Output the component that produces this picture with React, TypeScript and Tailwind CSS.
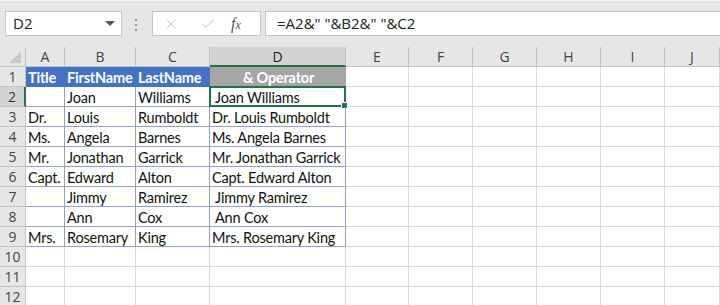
import {Check, X} from "lucide-react";

const colWidths = "grid-cols-[26px_39px_71px_74px_136px_63px_64px_64px_64px_64px_1fr]";
const letters = ["A", "B", "C", "D", "E", "F", "G", "H", "I", "J"];

const rows: string[][] = [
    ["", "Joan", "Williams", " Joan Williams"],
    ["Dr.", "Louis", "Rumboldt", "Dr. Louis Rumboldt"],
    ["Ms.", "Angela", "Barnes", "Ms. Angela Barnes"],
    ["Mr.", "Jonathan", "Garrick", "Mr. Jonathan Garrick"],
    ["Capt.", "Edward", "Alton", "Capt. Edward Alton"],
    ["", "Jimmy", "Ramirez", " Jimmy Ramirez"],
    ["", "Ann", "Cox", " Ann Cox"],
    ["Mrs.", "Rosemary", "King", "Mrs. Rosemary King"],
];

const uiFont = "font-['Open_Sans',sans-serif]";
const cellFont = "font-['Lato',sans-serif] text-[14.5px] tracking-[-0.2px] text-[#111] whitespace-pre leading-[19px] pl-[2px] pt-[1px] overflow-visible";

function EmptyCells() {
    return (
        <>
            {Array.from({length: 6}).map((_, i) => (
                <div key={i} className="h-[20px] border-r border-b border-[#d9d9d9]" />
            ))}
        </>
    );
}

function RowHeader({n, selected}: {n: number; selected?: boolean}) {
    return (
        <div
            className={
                selected
                    ? `h-[20px] flex items-center justify-center bg-[#d3d3d3] border-b border-[#c4c4c4] border-r-2 border-r-[#217346] text-[14px] text-[#333] ${uiFont}`
                    : `h-[20px] flex items-center justify-center bg-[#e6e6e6] border-b border-r border-[#c4c4c4] text-[14px] text-[#444] ${uiFont}`
            }>
            {n}
        </div>
    );
}

export default function App() {
    return (
        <div className="w-[720px] h-[305px] overflow-hidden bg-white">
            <div className="h-[47px] bg-[#e6e6e6] border-t border-[#f2f2f2] flex items-start pt-[10px] pl-[5px]">
                <div className="w-[117px] h-[25px] bg-white border border-[#c6c6c6] flex items-center justify-between pl-[7px] pr-[6px]">
                    <span className={`text-[15px] text-[#222] ${uiFont}`}>D2</span>
                    <span className="w-0 h-0 border-l-[5px] border-r-[5px] border-t-[5px] border-l-transparent border-r-transparent border-t-[#555]" />
                </div>
                <div className="ml-[13px] mt-[8px] flex flex-col gap-[3px]">
                    <span className="w-[2px] h-[2px] bg-[#9a9a9a]" />
                    <span className="w-[2px] h-[2px] bg-[#9a9a9a]" />
                    <span className="w-[2px] h-[2px] bg-[#9a9a9a]" />
                </div>
                <div className="ml-[15px] w-[109px] h-[25px] bg-white border border-[#c6c6c6] flex items-center">
                    <X className="ml-[10px] w-[16px] h-[16px] text-[#c2c2c2]" strokeWidth={1.5} />
                    <Check className="ml-[21px] w-[16px] h-[16px] text-[#c2c2c2]" strokeWidth={1.5} />
                    <span className="ml-[15px] text-[#555] italic font-['Liberation_Serif',serif] text-[16px] leading-none">
                        f<span className="text-[12px]">x</span>
                    </span>
                </div>
                <div className="ml-[4px] flex-1 h-[25px] bg-white border-y border-l border-[#c6c6c6] flex items-center pl-[11px]">
                    <span className={`text-[15px] text-[#222] whitespace-pre ${uiFont}`}>=A2&amp;" "&amp;B2&amp;" "&amp;C2</span>
                </div>
            </div>

            <div className={`grid ${colWidths}`}>
                {/* column headers */}
                <div className="relative h-[20px] bg-[#e6e6e6] border-r border-b border-[#c4c4c4]">
                    <span className="absolute right-[4px] bottom-[3px] w-0 h-0 border-b-[12px] border-l-[12px] border-b-[#c8c8c8] border-l-transparent" />
                </div>
                {letters.map((l) => (
                    <div
                        key={l}
                        className={
                            l === "D"
                                ? `h-[20px] flex items-center justify-center bg-[#d3d3d3] border-r border-[#c4c4c4] border-b-2 border-b-[#217346] text-[14px] text-[#222] ${uiFont}`
                                : `h-[20px] flex items-center justify-center bg-[#e6e6e6] border-r border-b border-[#c4c4c4] text-[14px] text-[#444] ${uiFont}`
                        }>
                        {l}
                    </div>
                ))}

                {/* row 1: table header */}
                <RowHeader n={1} />
                <div className={`h-[20px] bg-[#4472c4] border-r border-b border-[#4472c4] font-bold ${cellFont} !text-white`}>Title</div>
                <div className={`h-[20px] bg-[#4472c4] border-r border-b border-[#4472c4] font-bold ${cellFont} !text-white`}>FirstName</div>
                <div className={`h-[20px] bg-[#4472c4] border-r border-b border-[#4472c4] font-bold ${cellFont} !text-white`}>LastName</div>
                <div className={`h-[20px] bg-[#a5a5a5] border-r border-b border-[#a5a5a5] font-bold text-center ${cellFont} !text-white`}>&amp; Operator</div>
                <EmptyCells />

                {rows.map((r, i) => (
                    <div key={i} className="contents">
                        <RowHeader n={i + 2} selected={i === 0} />
                        <div className={`h-[20px] border-r border-b border-[#8fa3c7] ${cellFont}`}>{r[0]}</div>
                        <div className={`h-[20px] border-r border-b border-[#8fa3c7] ${cellFont}`}>{r[1]}</div>
                        <div className={`h-[20px] border-r border-b border-[#8fa3c7] ${cellFont}`}>{r[2]}</div>
                        <div className={`relative h-[20px] border-r border-b border-[#8fa3c7] ${cellFont}`}>
                            {r[3]}
                            {i === 0 ? (
                                <>
                                    <div className="absolute -left-[1px] -top-[1px] w-[137px] h-[21px] border-2 border-[#217346]" />
                                    <div className="absolute -right-[3px] -bottom-[3px] w-[5px] h-[5px] bg-[#217346] border border-white box-content" />
                                </>
                            ) : null}
                        </div>
                        <EmptyCells />
                    </div>
                ))}

                {[10, 11, 12].map((n) => (
                    <div key={n} className="contents">
                        <RowHeader n={n} />
                        {Array.from({length: 4}).map((_, j) => (
                            <div key={j} className="h-[20px] border-r border-b border-[#d9d9d9]" />
                        ))}
                        <EmptyCells />
                    </div>
                ))}
            </div>
        </div>
    );
}
